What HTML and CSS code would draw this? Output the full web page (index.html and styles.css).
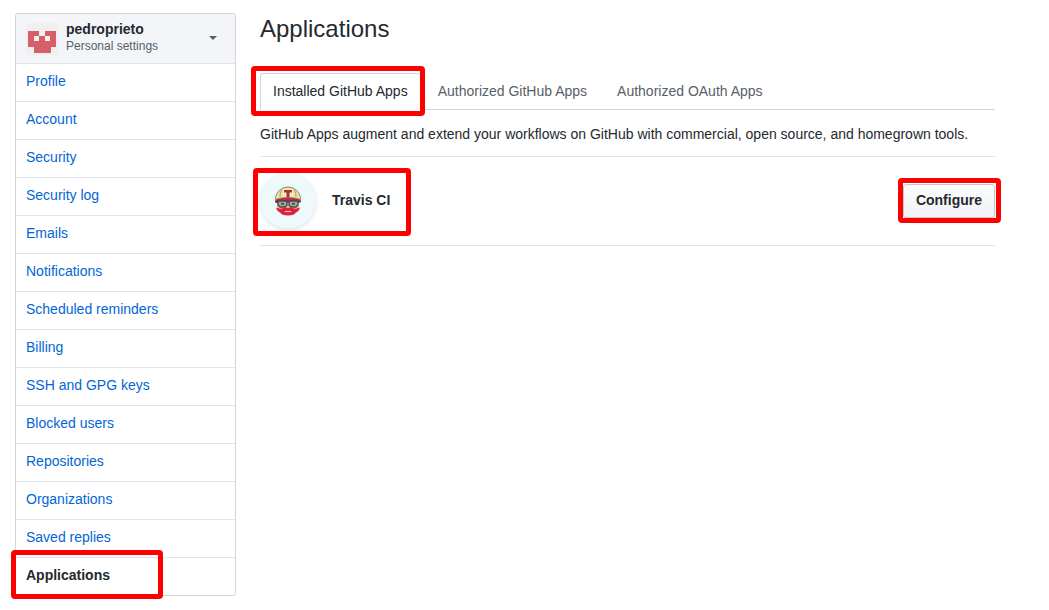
FILE: index.html
```html
<!DOCTYPE html>
<html lang="en">
<head>
<meta charset="utf-8">
<meta name="viewport" content="width=device-width, initial-scale=1">
<title>Applications</title>
<link rel="stylesheet" href="styles.css">
</head>
<body>
<div class="page">
  <nav class="menu" aria-label="Personal settings">
    <button class="account" type="button">
      <svg class="account-avatar" viewBox="0 0 32 32" aria-hidden="true">
        <rect width="32" height="32" rx="3" fill="#f0f0f0"/>
        <path fill="#d65f68" fill-rule="evenodd" d="M2 8h11v5h6V8h11v16h-5v6H8v-6H2zM8 13v5h5v-5zM19 13v5h5v-5z"/>
      </svg>
      <span class="account-text">
        <span class="account-name">pedroprieto</span>
        <span class="account-note">Personal settings</span>
      </span>
      <span class="caret"></span>
    </button>
    <a class="menu-item" href="#">Profile</a>
    <a class="menu-item" href="#">Account</a>
    <a class="menu-item" href="#">Security</a>
    <a class="menu-item" href="#">Security log</a>
    <a class="menu-item" href="#">Emails</a>
    <a class="menu-item" href="#">Notifications</a>
    <a class="menu-item" href="#">Scheduled reminders</a>
    <a class="menu-item" href="#">Billing</a>
    <a class="menu-item" href="#">SSH and GPG keys</a>
    <a class="menu-item" href="#">Blocked users</a>
    <a class="menu-item" href="#">Repositories</a>
    <a class="menu-item" href="#">Organizations</a>
    <a class="menu-item" href="#">Saved replies</a>
    <a class="menu-item selected" href="#" aria-current="page">Applications<span class="mark mark-menu"></span></a>
  </nav>
  <main class="content">
    <h1 class="title">Applications</h1>
    <div class="tabs">
      <a class="tab active" href="#" aria-current="page">Installed GitHub Apps<span class="mark mark-tab"></span></a>
      <a class="tab" href="#">Authorized GitHub Apps</a>
      <a class="tab" href="#">Authorized OAuth Apps</a>
    </div>
    <p class="intro">GitHub Apps augment and extend your workflows on GitHub with commercial, open source, and homegrown tools.</p>
    <div class="app">
      <div class="app-info">
        <span class="app-logo">
          <svg class="app-face" viewBox="0 0 28 30" aria-hidden="true">
            <path fill="#e6c7a4" d="M3 13h22v9l-4 4H7l-4-4z"/>
            <path fill="#cb2440" d="M1 15q1-4 13-4t13 4l-2 2q-11-4-20 0H2z"/>
            <path fill="#ede3a3" stroke="#77714f" stroke-width=".8" d="M1.500 13.500q0-6 4.500-9.500 3-3 8-3t8 3q4.500 3.500 4.500 9.500-12.500-4-25 0z"/>
            <path fill="none" stroke="#aaa16e" d="M8 3.500Q5.500 7 6 11M20 3.500q2.500 3.500 2 7.500"/>
            <path fill="#f5edbb" d="M9 3h10v8H9z"/>
            <path fill="#b52b3d" d="M10 4h8v2.500h-2.500V11h-3V6.500H10z"/>
            <path fill="#a9a79b" stroke="#414749" stroke-width="1.300" d="M4 15h9v4l-2 2H6l-2-2zM15 15h9v4l-2 2h-5l-2-2z"/>
            <path fill="none" stroke="#414749" stroke-width="1.500" d="M1 15.500h3M13 16h2M24 15.500h3"/>
            <path fill="#384244" d="M7 17h3v1.500H7zM18 17h3v1.500h-3z"/>
            <path fill="#d92340" d="M14 22q-3-1.500-5 0-3 1.500-7-.5 1 4 4 5l2 2q6 2 12 0l2-2q3-1 4-5-4 2-7 .5-2-1.500-5 0z"/>
            <path stroke="#f1cfba" d="M11 25.500h6"/>
          </svg>
        </span>
        <strong class="app-name">Travis CI</strong>
        <span class="mark mark-app"></span>
      </div>
      <button class="configure" type="button">Configure<span class="mark mark-button"></span></button>
    </div>
  </main>
</div>
</body>
</html>
```
FILE: styles.css
```css
* {
  box-sizing: border-box;
}

body {
  margin: 0;
  background: #fff;
  color: #24292e;
  font: 14px/21px "Liberation Sans", Arial, sans-serif;
}

.page {
  display: flex;
  align-items: flex-start;
  gap: 24px;
  max-width: 1010px;
  padding: 13px 15px;
}

.menu {
  flex: 0 0 221px;
  border: 1px solid #d1d5da;
  border-radius: 3px;
}

.account {
  display: flex;
  align-items: flex-start;
  gap: 8px;
  width: 100%;
  padding: 7px 18px 8px 10px;
  border: 0;
  border-radius: 2px 2px 0 0;
  background: #f3f5f9;
  color: inherit;
  font: inherit;
  text-align: left;
}

.account-avatar {
  width: 32px;
  height: 32px;
  margin-top: 2px;
}

.account-text {
  flex: 1;
}

.account-name,
.account-note {
  display: block;
  line-height: 17px;
}

.account-name {
  font-weight: 700;
}

.account-note {
  color: #586069;
  font-size: 12px;
}

.caret {
  align-self: center;
  border: 4px solid transparent;
  border-top-color: #586069;
  border-bottom: 0;
}

.menu-item {
  position: relative;
  display: block;
  padding: 7px 10px 9px;
  border-top: 1px solid #e1e4e8;
  color: #0366d6;
  text-decoration: none;
}

.selected {
  color: #24292e;
  font-weight: 700;
}

.content {
  flex: 1;
  min-width: 0;
}

.title {
  margin: 0 0 28px;
  font-size: 24px;
  font-weight: 400;
  line-height: 32px;
}

.tabs {
  display: flex;
  gap: 4px;
  border-bottom: 1px solid #d1d5da;
}

.tab {
  position: relative;
  margin-bottom: -1px;
  padding: 7px 12px 8px;
  border: 1px solid transparent;
  border-bottom: 0;
  color: #586069;
  text-decoration: none;
}

.active {
  border-color: #d1d5da;
  border-radius: 3px 3px 0 0;
  background: #fff;
  color: #24292e;
}

.intro {
  margin: 0;
  padding: 14px 0 11px;
  border-bottom: 1px solid #e1e4e8;
}

.app {
  display: flex;
  align-items: center;
  justify-content: space-between;
  padding: 16px 0;
  border-bottom: 1px solid #e1e4e8;
}

.app-info {
  position: relative;
  display: flex;
  align-items: center;
  gap: 16px;
}

.app-logo {
  display: grid;
  place-items: center;
  width: 56px;
  height: 56px;
  border-radius: 50%;
  background: #eff8fa;
  box-shadow: 0 1px 4px #d8dee4;
}

.app-face {
  width: 28px;
  height: 30px;
}

.app-name {
  padding-bottom: 2px;
  line-height: 20px;
}

.configure {
  position: relative;
  padding: 5px 12px 7px;
  border: 1px solid #c5c9ce;
  border-radius: 3px;
  background: linear-gradient(#fafbfc, #eff3f6);
  color: #24292e;
  font: inherit;
  font-weight: 700;
  line-height: 20px;
}

/* Red frames that point out each step */
.mark {
  position: absolute;
  border: 5px solid #f00;
  border-radius: 4px;
  pointer-events: none;
}

.mark-menu {
  top: -8px;
  bottom: -4px;
  left: -5px;
  width: 152px;
}

.mark-tab {
  inset: -8px -5px -6px -10px;
}

.mark-app {
  inset: -5px -21px -7px -7px;
}

.mark-button {
  inset: -7px -7px -6px -6px;
}
```
